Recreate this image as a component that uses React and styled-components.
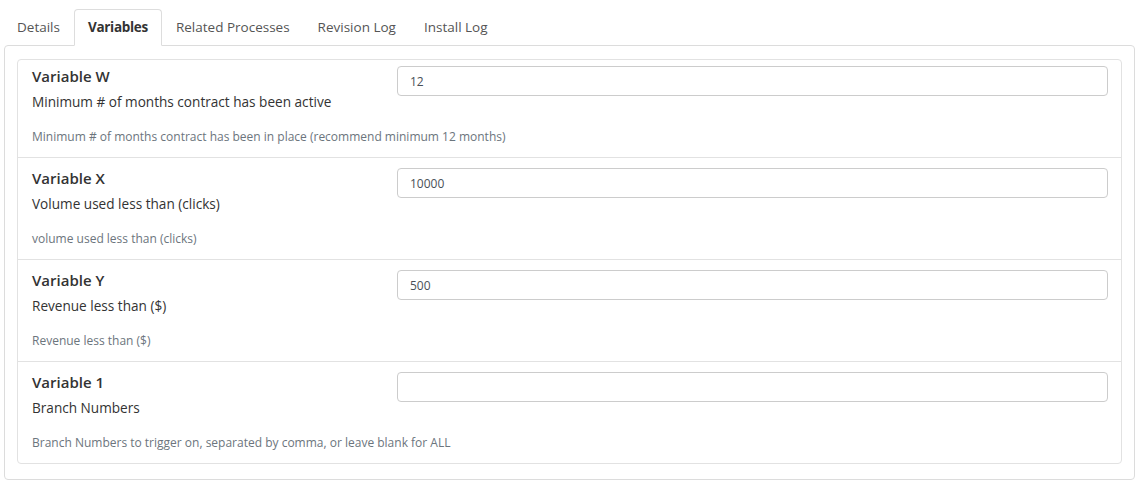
import React, { useState } from "react";
import styled, { createGlobalStyle } from "styled-components";

const GlobalStyle = createGlobalStyle`
  body {
    margin: 0;
    background: #fff;
    font-family: "Open Sans", "Noto Sans", Arial, sans-serif;
    color: #333;
  }
`;

const tabs = ["Details", "Variables", "Related Processes", "Revision Log", "Install Log"];

const variables = [
  {
    name: "Variable W",
    label: "Minimum # of months contract has been active",
    value: "12",
    help: "Minimum # of months contract has been in place (recommend minimum 12 months)",
  },
  {
    name: "Variable X",
    label: "Volume used less than (clicks)",
    value: "10000",
    help: "volume used less than (clicks)",
  },
  {
    name: "Variable Y",
    label: "Revenue less than ($)",
    value: "500",
    help: "Revenue less than ($)",
  },
  {
    name: "Variable 1",
    label: "Branch Numbers",
    value: "",
    help: "Branch Numbers to trigger on, separated by comma, or leave blank for ALL",
  },
];

const App = () => {
  const [active, setActive] = useState("Variables");
  const [values, setValues] = useState(variables.map((v) => v.value));

  const handleChange = (index, value) => {
    const next = [...values];
    next[index] = value;
    setValues(next);
  };

  return (
    <>
      <GlobalStyle />
      <StyledPage>
        <StyledTabList>
          {tabs.map((tab) => (
            <StyledTab
              key={tab}
              $active={tab === active}
              onClick={() => setActive(tab)}
            >
              {tab}
            </StyledTab>
          ))}
        </StyledTabList>
        <StyledPanel>
          {variables.map((variable, index) => (
            <StyledCard
              key={variable.name}
              $first={index === 0}
              $last={index === variables.length - 1}
            >
              <StyledCardRow>
                <div>
                  <StyledName>{variable.name}</StyledName>
                  <StyledLabel>{variable.label}</StyledLabel>
                </div>
                <StyledInput
                  type="text"
                  value={values[index]}
                  onChange={(e) => handleChange(index, e.target.value)}
                />
              </StyledCardRow>
              <StyledHelp>{variable.help}</StyledHelp>
            </StyledCard>
          ))}
        </StyledPanel>
      </StyledPage>
    </>
  );
};

export default App;

const StyledPage = styled.div`
  padding: 9px 10px 0 4px;
`;

const StyledTabList = styled.ul`
  display: flex;
  list-style: none;
  margin: 0 0 -1px -1px;
  padding: 0;
  position: relative;
  z-index: 1;
`;

const StyledTab = styled.li`
  padding: 8px 13px;
  font-size: 13.5px;
  line-height: 19px;
  cursor: pointer;
  border: 1px solid transparent;
  border-radius: 4px 4px 0 0;
  color: ${(p) => (p.$active ? "#333" : "#555")};
  font-weight: ${(p) => (p.$active ? 700 : 400)};
  letter-spacing: ${(p) => (p.$active ? "-0.3px" : "0")};
  background: ${(p) => (p.$active ? "#fff" : "transparent")};
  border-color: ${(p) => (p.$active ? "#ddd #ddd #fff" : "transparent")};
`;

const StyledPanel = styled.div`
  border: 1px solid #dcdcdc;
  border-radius: 4px;
  padding: 13px 12px 15px;
`;

const StyledCard = styled.div`
  border: 1px solid #e2e2e2;
  margin-top: ${(p) => (p.$first ? "0" : "-1px")};
  border-radius: ${(p) =>
    p.$first ? "4px 4px 0 0" : p.$last ? "0 0 4px 4px" : "0"};
  padding: ${(p) => (p.$first ? "6px" : "10px")} 13px 11px 14px;
`;

const StyledCardRow = styled.div`
  display: grid;
  grid-template-columns: 365px 1fr;
  align-items: start;
`;

const StyledName = styled.div`
  font-size: 15px;
  line-height: 20px;
  font-weight: 600;
  color: #333;
`;

const StyledLabel = styled.div`
  margin-top: 6px;
  font-size: 13.6px;
  line-height: 20px;
  color: #333;
`;

const StyledInput = styled.input`
  box-sizing: border-box;
  width: 100%;
  height: 30px;
  padding: 0 12px;
  border: 1px solid #ccc;
  border-radius: 4px;
  font-family: inherit;
  font-size: 12px;
  color: #495057;
  outline: none;
`;

const StyledHelp = styled.div`
  margin-top: 16px;
  font-size: 12px;
  line-height: 18px;
  color: #6c757d;
`;
